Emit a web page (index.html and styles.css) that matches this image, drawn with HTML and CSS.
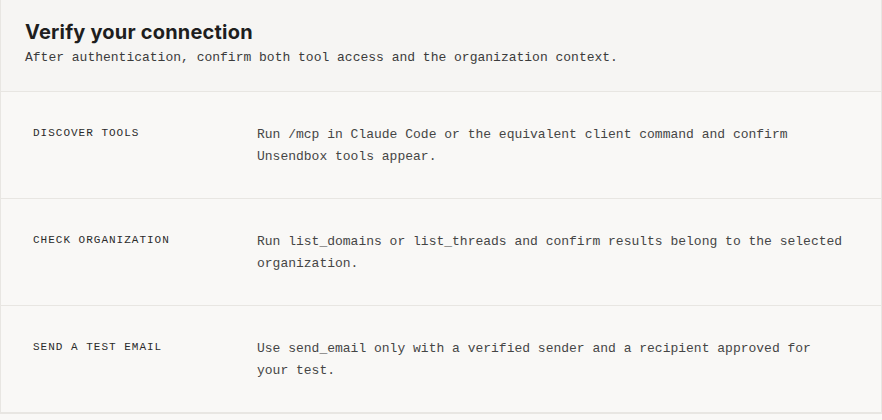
FILE: index.html
```html
<!DOCTYPE html>
<html lang="en">

<head>
    <meta charset="UTF-8">
    <meta name="viewport" content="width=device-width, initial-scale=1.0">
    <title>Verify your connection</title>

    <link rel="stylesheet" href="styles.css">
</head>

<body>
    <section class="verify-card">
        <div class="verify-header">
            <h2 class="verify-title">Verify your connection</h2>
            <p class="verify-subtitle">After authentication, confirm both tool access and the organization context.</p>
        </div>

        <div class="check-row">
            <div class="check-label">Discover tools</div>
            <div class="check-text">Run /mcp in Claude Code or the equivalent client command and confirm Unsendbox tools appear.</div>
        </div>

        <div class="check-row">
            <div class="check-label">Check organization</div>
            <div class="check-text">Run list_domains or list_threads and confirm results belong to the selected organization.</div>
        </div>

        <div class="check-row">
            <div class="check-label">Send a test email</div>
            <div class="check-text">Use send_email only with a verified sender and a recipient approved for your test.</div>
        </div>
    </section>
</body>

</html>
```

FILE: styles.css
```css
body {
    margin: 0;
    background: #f9f8f6;
    font-family: "Liberation Mono", "DejaVu Sans Mono", monospace;
}

.verify-card {
    border: 1px solid #e8e6e2;
    border-top: none;
    background: #f9f8f6;
}

.verify-header {
    background: #f6f5f3;
    padding: 19px 24px 24px;
    border-bottom: 1px solid #e8e6e2;
}

.verify-title {
    margin: 0;
    font-family: Inter, "Noto Sans", sans-serif;
    font-size: 20px;
    font-weight: 700;
    letter-spacing: 0.2px;
    line-height: 26px;
    color: #1e1e1e;
}

.verify-subtitle {
    margin: 4px 0 0;
    font-size: 13px;
    line-height: 18px;
    color: #3b3b3b;
}

.check-row {
    display: grid;
    grid-template-columns: 224px 1fr;
    padding: 32px 32px 30px;
    border-bottom: 1px solid #e8e6e2;
}

.check-label {
    font-size: 11px;
    letter-spacing: 1px;
    text-transform: uppercase;
    line-height: 18px;
    color: #2a2a2a;
}

.check-text {
    max-width: 588px;
    font-size: 13px;
    line-height: 22px;
    color: #454545;
}
```
